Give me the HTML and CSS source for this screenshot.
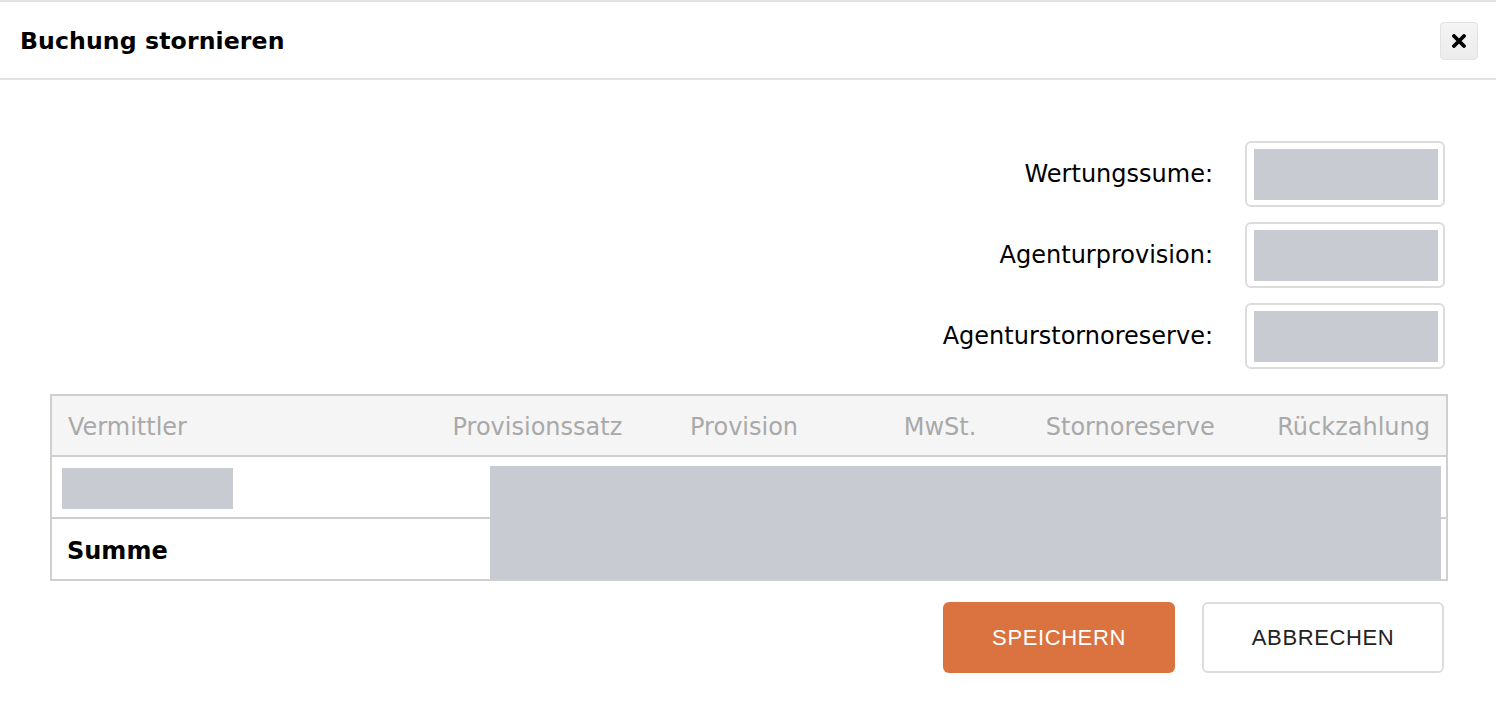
FILE: index.html
```html
<!DOCTYPE html>
<html lang="de">
<head>
<meta charset="utf-8">
<title>Buchung stornieren</title>
<link rel="stylesheet" href="styles.css">
</head>
<body>
<div class="dialog">
  <header class="dialog-header">
    <h1 class="dialog-title">Buchung stornieren</h1>
    <button class="close-btn" type="button" aria-label="Schließen">
      <svg width="14" height="14" viewBox="0 0 14 14"><path d="M2 2 L12 12 M12 2 L2 12" stroke="#000" stroke-width="3.8" stroke-linecap="round"/></svg>
    </button>
  </header>
  <div class="dialog-body">
    <div class="form-rows">
      <div class="form-row">
        <label class="form-label">Wertungssume:</label>
        <div class="input-box"><div class="redact"></div></div>
      </div>
      <div class="form-row">
        <label class="form-label">Agenturprovision:</label>
        <div class="input-box"><div class="redact"></div></div>
      </div>
      <div class="form-row">
        <label class="form-label">Agenturstornoreserve:</label>
        <div class="input-box"><div class="redact"></div></div>
      </div>
    </div>
    <div class="table-wrap">
      <table class="data-table">
        <colgroup>
          <col class="c-name"><col class="c-satz"><col class="c-prov"><col class="c-mwst"><col class="c-storno"><col class="c-rueck">
        </colgroup>
        <thead>
          <tr>
            <th class="left">Vermittler</th>
            <th>Provisionssatz</th>
            <th>Provision</th>
            <th>MwSt.</th>
            <th>Stornoreserve</th>
            <th>Rückzahlung</th>
          </tr>
        </thead>
        <tbody>
          <tr class="row-agent">
            <td class="left"><div class="redact-name"></div></td>
            <td></td><td></td><td></td><td></td><td></td>
          </tr>
          <tr class="row-sum">
            <td class="left sum-label">Summe</td>
            <td></td><td></td><td></td><td></td><td></td>
          </tr>
        </tbody>
      </table>
      <div class="redact-values"></div>
    </div>
    <div class="actions">
      <button class="btn btn-primary" type="button">SPEICHERN</button>
      <button class="btn btn-secondary" type="button">ABBRECHEN</button>
    </div>
  </div>
</div>
</body>
</html>
```

FILE: styles.css
```css
html, body {
  margin: 0;
  padding: 0;
  background: #fff;
}

body {
  font-family: "DejaVu Sans", Verdana, sans-serif;
  color: #000;
}

.dialog {
  width: 1496px;
  border-top: 2px solid #e2e2e2;
}

.dialog-header {
  height: 76px;
  border-bottom: 2px solid #e2e2e2;
  display: flex;
  align-items: center;
  justify-content: space-between;
  padding: 0 18px 0 20px;
}

.dialog-title {
  margin: 0;
  padding-top: 2px;
  font-size: 23.6px;
  font-weight: bold;
  letter-spacing: 0.1px;
}

.close-btn {
  width: 38px;
  height: 38px;
  margin-top: 2px;
  border: 1px solid #e2e2e2;
  border-radius: 4px;
  background: linear-gradient(#f4f4f4, #ececec);
  display: flex;
  align-items: center;
  justify-content: center;
  padding: 0;
}

.close-btn svg {
  display: block;
}

.dialog-body {
  padding: 61px 48px 0 50px;
}

.form-rows {
  display: flex;
  flex-direction: column;
  gap: 15px;
  align-items: flex-end;
  padding-right: 3px;
}

.form-row {
  display: flex;
  align-items: center;
  gap: 32px;
}

.form-label {
  font-size: 24px;
  text-align: right;
  color: #000;
}

.input-box {
  width: 200px;
  height: 66px;
  box-sizing: border-box;
  border: 2px solid #dcdcdc;
  border-radius: 6px;
  padding: 6px 5px 5px 7px;
}

.redact {
  width: 100%;
  height: 100%;
  background: #c8cbd2;
}

.table-wrap {
  position: relative;
  margin-top: 25px;
}

.data-table {
  width: 1398px;
  border-collapse: collapse;
  border: 2px solid #cfcfcf;
  table-layout: fixed;
  font-size: 24px;
}

.c-name { width: 385px; }
.c-satz { width: 200px; }
.c-prov { width: 177px; }
.c-mwst { width: 178px; }
.c-storno { width: 238px; }
.c-rueck { width: 216px; }

.data-table th {
  background: #f5f5f5;
  color: #a9a9a9;
  font-weight: normal;
  text-align: right;
  height: 57px;
  padding: 2px 16px 0;
  border-bottom: 2px solid #cfcfcf;
  white-space: nowrap;
}

.data-table th.left {
  padding-left: 16px;
}

.data-table td {
  height: 60px;
  padding: 0 16px;
  border-bottom: 2px solid #cfcfcf;
}

.data-table .left {
  text-align: left;
}

.row-agent td.left {
  height: 58px;
  padding: 2px 10px 0;
}

.redact-name {
  width: 171px;
  height: 41px;
  background: #c8cbd2;
}

.data-table td.sum-label {
  font-weight: bold;
  height: 57px;
  padding: 3px 16px 0 15px;
}

.redact-values {
  position: absolute;
  left: 440px;
  top: 72px;
  width: 951px;
  height: 113px;
  background: #c8cbd2;
}

.actions {
  display: flex;
  justify-content: flex-end;
  gap: 27px;
  margin-top: 21px;
  padding-right: 4px;
}

.btn {
  height: 71px;
  border-radius: 6px;
  font-family: "Liberation Sans", Arial, sans-serif;
  font-size: 22px;
  letter-spacing: 0.6px;
  cursor: pointer;
}

.btn-primary {
  width: 232px;
  background: #da7340;
  color: #fff;
  border: none;
}

.btn-secondary {
  width: 242px;
  background: #fff;
  color: #222;
  border: 2px solid #dcdcdc;
}
```
